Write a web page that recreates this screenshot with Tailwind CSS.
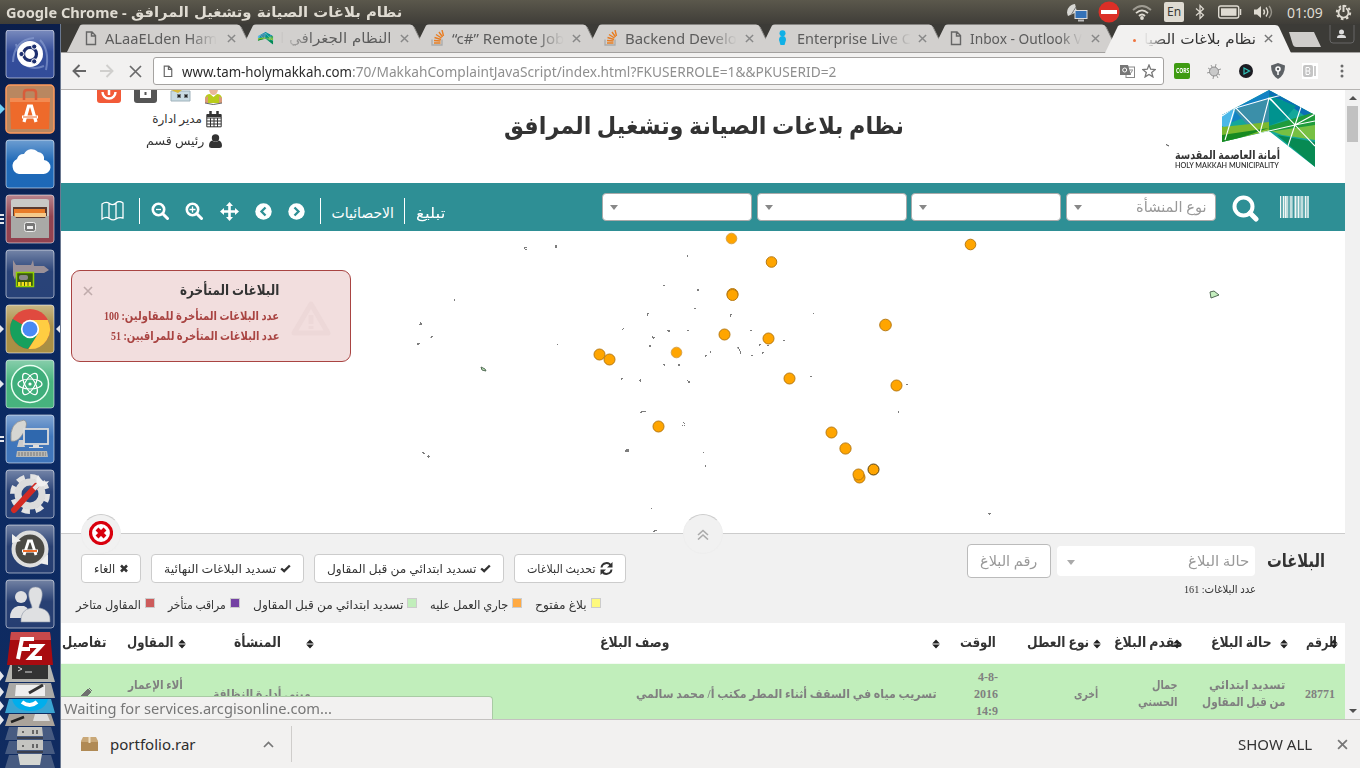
<!DOCTYPE html>
<html lang="ar">
<head>
<meta charset="utf-8">
<title>نظام بلاغات الصيانة وتشغيل المرافق</title>
<script src="https://cdn.jsdelivr.net/npm/@tailwindcss/browser@4"></script>
</head>
<body class="w-[1360px] h-[768px] overflow-hidden bg-[#f2f1f0] font-['Noto_Sans','DejaVu_Sans',sans-serif] text-[#333]">
<svg width="0" height="0" class="absolute">
  <defs>
    <linearGradient id="gloss" x1="0" y1="0" x2="0" y2="1"><stop offset="0" stop-color="#fff" stop-opacity=".38"/><stop offset=".45" stop-color="#fff" stop-opacity=".05"/><stop offset="1" stop-color="#fff" stop-opacity=".04"/></linearGradient>
    <symbol id="tab" viewBox="0 0 186 28"><path d="M0 28 L13 1.500 Q14 .5 16 .5 H170 Q173 .5 174 3 L186 28Z" fill="currentColor"/><path d="M174 3 L186 27.500" stroke="#8f8e8c" fill="none"/></symbol>
    <symbol id="page" viewBox="0 0 12 15"><path d="M1.500 1H7L10.500 4.500V13.500H1.500ZM6.500 1V5H10.500" fill="none" stroke="#666" stroke-width="1.400"/></symbol>
    <symbol id="x" viewBox="0 0 10 10"><path d="M1 1 9 9M9 1 1 9" stroke="currentColor" stroke-width="1.600"/></symbol>
    <symbol id="stack" viewBox="0 0 14 16"><path d="M1 9.500V15H11V9.500" fill="none" stroke="#aaa" stroke-width="1.300"/><path d="M3 13H9.500M3 10.500 9.500 11M3.500 7.500 10 9.500M5 4.500 10.500 8M8 2 11.500 7M11 0 12.500 6" stroke="#e87d22" stroke-width="1.400"/></symbol>
    <symbol id="sort" viewBox="0 0 8 10"><path d="M4 .5 7.800 4.500H.2ZM4 9.500 .2 5.500H7.800Z" fill="#222"/></symbol>
    <symbol id="check" viewBox="0 0 12 10"><path d="M1.200 5 4.500 8 10.800 1.700" fill="none" stroke="#333" stroke-width="2.600"/></symbol>
    <symbol id="zoomglass" viewBox="0 0 18 18"><circle cx="7.500" cy="7.500" r="5.700" fill="none" stroke="#fff" stroke-width="2.600"/><path d="M11.800 11.800 16.500 16.500" stroke="#fff" stroke-width="3" stroke-linecap="round"/></symbol>
    <symbol id="logo" viewBox="0 0 93 78">
      <clipPath id="lc"><path d="M0 25 47 0 93 25V77L47 41 0 52Z"/></clipPath>
      <g clip-path="url(#lc)"><rect width="93" height="78" fill="#14a79a"/><path d="M0 25 47 0V18L0 36Z" fill="#1283c4"/><path d="M0 36V24L14 18 7 40Z" fill="#4bb8e8"/><path d="M12 20 47 8V38L30 40Z" fill="#3b8fa9"/><path d="M47 0 93 25V33L60 10 47 8Z" fill="#0a6fb4"/><path d="M47 5 74 16 62 30 47 36Z" fill="#00938f"/><path d="M0 37 47 32V41L0 52Z" fill="#7bb92f"/><path d="M0 45 34 40 47 38 0 54Z" fill="#178a22"/><path d="M47 40 93 30V50L60 45Z" fill="#77c043"/><path d="M47 36 93 22V35L47 42Z" fill="#1f9b3c"/><path d="M55 45 93 52V77Z" fill="#078a53"/>
      <path d="M3 50 13 17 38 43 47 8 73 35 93 31M0 22 48 8 60 5M48 8 73 35 93 56M79 17 66 56M38 43 73 35 93 24M0 26 13 17" stroke="#fff" stroke-width="1.100" fill="none"/></g>
    </symbol>
  </defs>
</svg>
<div class="flex h-[768px] flex-col">

<!-- desktop panel -->
<header class="flex h-6 shrink-0 items-center bg-linear-to-b from-[#5b584c] to-[#3f3d38] pr-2 pl-[6px] text-[#dfdbd2]">
  <span data-fit class="w-[121px] text-[14px] font-bold">Google Chrome -</span>
  <span data-fit dir="rtl" class="ml-[4px] w-[271px] font-['DejaVu_Sans'] text-[14px] font-bold">نظام بلاغات الصيانة وتشغيل المرافق</span>
  <div class="ml-auto flex items-center">
    <svg width="23" height="20" viewBox="0 0 23 20"><path d="M2 14C-1 8 4 2 9 2L11 10Z" fill="#d8d8d4"/><path d="M5 13 10 5" stroke="#777"/><rect x="9" y="8.500" width="12" height="8" fill="#3472b8" stroke="#ddd"/><path d="M12 18.500H18" stroke="#bbb" stroke-width="2"/></svg>
    <svg class="ml-[9px]" width="22" height="22"><circle cx="11" cy="11" r="10.500" fill="#dc2f27"/><rect x="3" y="9" width="16" height="4" fill="#fff"/></svg>
    <svg class="ml-[12px]" width="20" height="16" viewBox="0 0 20 16" fill="none" stroke="#dfdbd2" stroke-width="1.800"><path d="M1 6Q10-2 19 6" opacity=".55"/><path d="M4 9.200Q10 3.500 16 9.200M7 12Q10 9 13 12"/><circle cx="10" cy="14" r="1" fill="#dfdbd2"/></svg>
    <span class="ml-[12px] flex h-5 w-5 items-center justify-center rounded-xs bg-[#dfdbd2] text-[12px] text-[#3c3b37]">En</span>
    <svg class="ml-[11px]" width="10" height="16" viewBox="0 0 10 16" fill="none" stroke="#dfdbd2" stroke-width="1.200"><path d="M1 4.500 8.500 11 5 14.500V1.500L8.500 5 1 11.500"/></svg>
    <svg class="ml-[13px]" width="24" height="14" fill="none" stroke="#dfdbd2"><rect x=".7" y="1" width="20" height="12" rx="2" stroke-width="1.400"/><rect x="3" y="3.300" width="15.500" height="7.500" fill="#dfdbd2" stroke="none"/><path d="M22.500 4V10" stroke-width="1.500"/></svg>
    <svg class="ml-[12px]" width="20" height="16" viewBox="0 0 20 16" fill="none" stroke="#dfdbd2" stroke-width="1.400"><path d="M0 5.500H3L7 2V14L3 10.500H0Z" fill="#dfdbd2" stroke="none"/><path d="M9.500 5.500Q11.500 8 9.500 10.500M12 3.500Q15.500 8 12 12.500"/><path d="M15 2Q20 8 15 14" opacity=".5"/></svg>
    <span data-fit class="ml-[13px] w-[36px] text-[14px]">01:09</span>
    <svg class="ml-[12px]" width="17" height="17" viewBox="0 0 17 17" fill="none" stroke="#dfdbd2"><circle cx="8.500" cy="8.500" r="6.700" stroke-width="2" stroke-dasharray="2.600 2.660"/><path d="M6 4.300A5 5 0 1 0 11 4.300" stroke-width="1.800"/><path d="M8.500 1V8" stroke-width="2"/></svg>
  </div>
</header>

<div class="flex min-h-0 flex-1">
<!-- launcher -->
<aside class="flex w-[61px] shrink-0 flex-col border-r border-[#6a7890] bg-linear-to-b from-[#0b1e4b] via-[#0b2a63] to-[#102b60] pt-[6px]">
  <svg width="60" height="738" viewBox="0 30 60 738">
    <g stroke="#fff" stroke-opacity=".3">
      <g transform="translate(6 30)"><rect width="48" height="48" rx="3" fill="#2a4596"/><rect width="48" height="48" rx="3" fill="url(#gloss)"/></g>
      <g transform="translate(6 85)"><rect width="48" height="48" rx="4" fill="#b98760" stroke="#ff9a5c" stroke-opacity="1" stroke-width="1.500"/></g>
      <g transform="translate(6 140)"><rect width="48" height="48" rx="3" fill="#1462b5"/><rect width="48" height="48" rx="3" fill="url(#gloss)"/></g>
      <g transform="translate(6 195)"><rect width="48" height="48" rx="3" fill="#8d3a48"/><rect width="48" height="48" rx="3" fill="url(#gloss)"/></g>
      <g transform="translate(6 250)"><rect width="48" height="48" rx="3" fill="#1f3a72"/><rect width="48" height="48" rx="3" fill="url(#gloss)"/></g>
      <g transform="translate(6 305)"><rect width="48" height="48" rx="3" fill="#a58a3c"/><rect width="48" height="48" rx="3" fill="url(#gloss)"/></g>
      <g transform="translate(6 360)"><rect width="48" height="48" rx="3" fill="#3fb078"/><rect width="48" height="48" rx="3" fill="url(#gloss)"/></g>
      <g transform="translate(6 415)"><rect width="48" height="48" rx="3" fill="#366fb8"/><rect width="48" height="48" rx="3" fill="url(#gloss)"/></g>
      <g transform="translate(6 470)"><rect width="48" height="48" rx="3" fill="#1f3a72"/><rect width="48" height="48" rx="3" fill="url(#gloss)"/></g>
      <g transform="translate(6 525)"><rect width="48" height="48" rx="3" fill="#1d366c"/><rect width="48" height="48" rx="3" fill="url(#gloss)"/></g>
      <g transform="translate(6 580)"><rect width="48" height="48" rx="3" fill="#1d366c"/><rect width="48" height="48" rx="3" fill="url(#gloss)"/></g>
    </g>
    <!-- dash -->
    <path d="M13 62Q14 40 34 38M46 70Q50 50 40 40M16 44Q22 75 44 66" fill="none" stroke="#8fa3d6" stroke-width="2" opacity=".6"/>
    <circle cx="30" cy="54" r="13" fill="#fff"/><circle cx="30" cy="54" r="6.500" fill="none" stroke="#1d2f6f" stroke-width="3.200"/><g fill="#1d2f6f" stroke="#fff"><circle cx="21.500" cy="54" r="2.600"/><circle cx="34.200" cy="46.600" r="2.600"/><circle cx="34.200" cy="61.400" r="2.600"/></g>
    <!-- software center -->
    <path d="M10 98H50L49 129H11Z" fill="#ee6a2b"/><path d="M10 98H50V102H10Z" fill="#f28a52"/><path d="M24 100V93Q24 90 27 90H33Q36 90 36 93V100" fill="none" stroke="#d85c3a" stroke-width="2.500"/><path d="M24 122 28.500 106H31.500L36 122M22 117H38" fill="none" stroke="#fff" stroke-width="3.200"/><path d="M23 117H37" stroke="#ee6a2b"/>
    <!-- cloud -->
    <path d="M19 174A8 8 0 0 1 17 159 7 7 0 0 1 24 154 8.500 8.500 0 0 1 38 152 6.500 6.500 0 0 1 44 160 7 7 0 0 1 43 174Z" fill="#fff"/>
    <!-- files -->
    <path d="M11 201Q11 199 14 199H46Q49 199 49 201V238H11Z" fill="#c9c9c7"/><path d="M13 207H47V218H13Z" fill="#5a3a30"/><path d="M14 209H45V217H14Z" fill="#e87b28"/><path d="M15 213H46V217H15Z" fill="#f6c98a"/><path d="M11 216H15L16 218H45L46 216H49V238H11Z" fill="#a9a9a7"/><rect x="24.500" y="222.500" width="11" height="9" rx="2" fill="#777" stroke="#eee"/><rect x="27" y="226" width="6" height="3" fill="#eee"/>
    <!-- caliper -->
    <path d="M13 260 16 265H31L33 260 34 266H44L49 270 44 273H34L32 280 30 273H17L15 280 13 275Z" fill="#9a9098"/><rect x="16.500" y="272.500" width="17" height="14" fill="#3a5a10" stroke="#8fd000" stroke-width="1.500"/><path d="M18 284H32" stroke="#f4e11c" stroke-width="4" stroke-dasharray="2.500 1"/><rect x="19" y="275" width="9" height="5" rx="2" fill="#888"/>
    <!-- chrome -->
    <circle cx="30" cy="329" r="20" fill="#e04a3f"/><path d="M30 329 12.700 319A20 20 0 0 0 28 348.900L38.500 334Z" fill="#16a05d"/><path d="M30 320H47.800A20 20 0 0 1 28.500 349L38.500 333Z" fill="#ffcd42"/><circle cx="30" cy="329" r="9.200" fill="#fff"/><circle cx="30" cy="329" r="7.500" fill="#4a8af4"/>
    <!-- atom -->
    <circle cx="30" cy="384" r="18.500" fill="#3fae7b" stroke="#e9fff2" stroke-width="1.500"/><g fill="none" stroke="#fff" stroke-width="1.200"><ellipse cx="30" cy="384" rx="12" ry="5"/><ellipse cx="30" cy="384" rx="12" ry="5" transform="rotate(60 30 384)"/><ellipse cx="30" cy="384" rx="12" ry="5" transform="rotate(120 30 384)"/></g><circle cx="30" cy="384" r="1.600" fill="#fff"/>
    <!-- remote desktop -->
    <path d="M11 441Q9 422 24 420 29 422 24 432 18 443 11 441Z" fill="#d6d6d2" stroke="#888" stroke-width=".7"/><path d="M19 440H23L25 447H17Z" fill="#ccc"/><rect x="24" y="429" width="24" height="15" fill="#2f68ae" stroke="#dcdcdc" stroke-width="1.800"/><path d="M33 445H39V447H43V448H29V447H33Z" fill="#ddd"/><path d="M17 451H47L48 457H16Z" fill="#b9b9b5"/><path d="M18 453H46M18 455H46" stroke="#777" stroke-dasharray="2 1"/>
    <!-- settings -->
    <circle cx="30" cy="494" r="17.500" fill="none" stroke="#e3e3e3" stroke-width="5" stroke-dasharray="8 5.700"/><circle cx="30" cy="494" r="12" fill="none" stroke="#dcdcdc" stroke-width="7"/><path d="M14 510 36 486" stroke="#d32a23" stroke-width="6" stroke-linecap="round"/><path d="M34 489 41 482" stroke="#e5e5e5" stroke-width="4"/><path d="M38 475Q34 482 39 486 45 488 49 481L44 482 41 479Z" fill="#f0f0f0"/>
    <!-- updater -->
    <circle cx="30" cy="549" r="16.500" fill="#4b4a45" stroke="#dedede" stroke-width="4"/><path d="M24 555 28.500 541H31.500L36 555M22 551H38" fill="none" stroke="#fff" stroke-width="2.800"/><path d="M23 551H37" stroke="#ef6b27" stroke-width="2"/><path d="M12 534 21 541 12 543ZM48 565V554L39 563Z" fill="#eee"/>
    <!-- users -->
    <g fill="#dfe0e2"><circle cx="21" cy="597" r="6"/><path d="M10 618Q10 608 18 606H24Q30 608 30 618Z"/><path d="M35.500 587C41 587 43 591 42 597 41 603 39 605 39 608H40Q51 610 50 622H21Q20 610 31 608H32C32 605 30 603 29 597 28 591 30 587 35.500 587Z" stroke="#8c93a5" stroke-width=".6"/></g>
    <!-- collapsed stack -->
    <path d="M11 632H50L53 665H7Z" fill="#a80b10"/><path d="M11 632H50L51 640H10Z" fill="#c8494b"/>
    <path d="M18 659 22 639H34M20 649H30M29 646H41L30 658H42" fill="none" stroke="#fff" stroke-width="4"/>
    <path d="M10 665H50L55 682H5Z" fill="#b5b5b0"/><path d="M12 665H48V679H12Z" fill="#333"/><path d="M18 667 22 669 18 671M25 672H32" stroke="#ddd" fill="none"/>
    <path d="M9 683H51L55 698H5Z" fill="#aaa9a6"/><path d="M16 685H45V696H15Z" fill="#eee"/><path d="M29 693 43 685" stroke="#333" stroke-width="3"/>
    <path d="M9 699H51L55 713H5Z" fill="#3aa4d2"/><path d="M12 699H48Q45 711 30 711 15 711 12 699Z" fill="#00aeec"/><path d="M22 702Q30 708 37 702" fill="none" stroke="#fff" stroke-width="4"/>
    <path d="M9 714H51L55 726H5Z" fill="#aaa39b"/><path d="M11 722 24 717" stroke="#222" stroke-width="2.500"/><path d="M35 714H47L50 721H33Z" fill="#ddd"/>
    <path d="M9 727H51L55 740H5ZM9 741H51L55 754H5ZM9 755H51L55 768H5Z" fill="#6d7b98" fill-opacity=".6"/><path d="M18 727H42L43 736H17ZM17 740H43V750H17Z" fill="#c4c4c1"/><path d="M23 731V733M33 730V734M23 745V747M33 744V748M37 730V734M37 744V748" stroke="#666" stroke-width="2"/><path d="M17 738H43M17 752H43" stroke="#3a3f4d" stroke-width="2"/><path d="M18 754H42L40 765H20Z" fill="#d4d6d2"/>
    <path d="M0 104 5 109 0 114Z" fill="#6fd0f5"/><g fill="#e4e6ec"><path d="M0 325 4 329 0 333ZM60 325 56 329 60 333ZM0 380 4 384 0 388ZM0 671 4 676 0 681ZM0 687 4 692 0 697ZM0 701 4 706 0 711ZM0 715 4 720 0 725ZM0 214H4V216H0ZM0 218H4V220H0ZM0 222H4V224H0ZM0 436H4V438H0ZM0 440H4V442H0Z"/></g>
  </svg>
</aside>

<main class="flex min-w-0 flex-1 flex-col">
  <!-- tab strip -->
  <div class="flex h-[29px] shrink-0 border-b border-[#a3a19f] bg-[#3c3b37] pl-[6px] text-[14px] text-[#5c5c5c]">
    <div class="relative mr-[-13px] flex h-7 w-[186px] shrink-0 items-center pl-[18px]"><svg class="absolute inset-0 text-[#d2d0ce]" width="186" height="28"><use href="#tab"/></svg>
      <svg class="relative" width="12" height="15"><use href="#page"/></svg><span class="relative ml-[8px] w-[112px] overflow-hidden whitespace-nowrap mask-r-from-75%"><span data-fit class="inline-block w-[112px]">ALaaELden Ham</span></span><svg class="relative ml-[10px] text-[#888]" width="9" height="9"><use href="#x"/></svg></div>
    <div class="relative mr-[-13px] flex h-7 w-[186px] shrink-0 items-center pl-[17px]"><svg class="absolute inset-0 text-[#d2d0ce]" width="186" height="28"><use href="#tab"/></svg>
      <svg class="relative" width="17" height="13"><use href="#logo"/></svg><span dir="rtl" class="relative ml-[6px] w-[112px] overflow-hidden whitespace-nowrap mask-l-from-70%"><span data-fit class="inline-block w-[112px] font-['DejaVu_Sans']">النظام الجغرافي ا</span></span><svg class="relative ml-[8px] text-[#888]" width="9" height="9"><use href="#x"/></svg></div>
    <div class="relative mr-[-13px] flex h-7 w-[186px] shrink-0 items-center pl-[18px]"><svg class="absolute inset-0 text-[#d2d0ce]" width="186" height="28"><use href="#tab"/></svg>
      <svg class="relative" width="14" height="16"><use href="#stack"/></svg><span class="relative ml-[7px] w-[112px] overflow-hidden whitespace-nowrap mask-r-from-75%"><span data-fit class="inline-block w-[112px]">“c#” Remote Job</span></span><svg class="relative ml-[8px] text-[#888]" width="9" height="9"><use href="#x"/></svg></div>
    <div class="relative mr-[-13px] flex h-7 w-[186px] shrink-0 items-center pl-[18px]"><svg class="absolute inset-0 text-[#d2d0ce]" width="186" height="28"><use href="#tab"/></svg>
      <svg class="relative" width="14" height="16"><use href="#stack"/></svg><span class="relative ml-[7px] w-[112px] overflow-hidden whitespace-nowrap mask-r-from-75%"><span data-fit class="inline-block w-[112px]">Backend Develo</span></span><svg class="relative ml-[8px] text-[#888]" width="9" height="9"><use href="#x"/></svg></div>
    <div class="relative mr-[-13px] flex h-7 w-[186px] shrink-0 items-center pl-[19px]"><svg class="absolute inset-0 text-[#d2d0ce]" width="186" height="28"><use href="#tab"/></svg>
      <svg class="relative" width="9" height="16"><circle cx="4.500" cy="3.300" r="3" fill="#10b0e6"/><path d="M1 10Q1 6 4.500 6T8 10L6.500 15H2.500Z" fill="#10b0e6"/></svg><span class="relative ml-[10px] w-[114px] overflow-hidden whitespace-nowrap mask-r-from-75%"><span data-fit class="inline-block w-[114px]">Enterprise Live C</span></span><svg class="relative ml-[7px] text-[#888]" width="9" height="9"><use href="#x"/></svg></div>
    <div class="relative mr-[-13px] flex h-7 w-[186px] shrink-0 items-center pl-[18px]"><svg class="absolute inset-0 text-[#d2d0ce]" width="186" height="28"><use href="#tab"/></svg>
      <svg class="relative" width="12" height="15"><use href="#page"/></svg><span class="relative ml-[8px] w-[112px] overflow-hidden whitespace-nowrap mask-r-from-80%"><span data-fit class="inline-block w-[112px]">Inbox - Outlook V</span></span><svg class="relative ml-[9px] text-[#888]" width="9" height="9"><use href="#x"/></svg></div>
    <div class="relative flex h-[29px] w-[186px] shrink-0 items-center pl-[28px] text-[#333]"><svg class="absolute inset-0 text-[#f2f1f0]" width="186" height="29" viewBox="0 0 186 29"><path d="M0 29 13 2Q14 1 16 1H170Q173 1 174 3L186 29Z" fill="currentColor"/></svg>
      <span class="relative mt-[3px] h-[3px] w-[3px] rounded-full bg-[#f0743e]"></span><span dir="rtl" class="relative ml-[8px] w-[112px] overflow-hidden whitespace-nowrap mask-l-from-80%"><span data-fit class="inline-block w-[112px] font-['DejaVu_Sans']">نظام بلاغات الصيا</span></span><svg class="relative ml-[8px] text-[#777]" width="9" height="9"><use href="#x"/></svg></div>
    <svg class="mt-[7px] ml-[-3px]" width="34" height="17"><path d="M1 1H26L33 16H8Q6 16 5 14Z" fill="#cfcdcb"/></svg>
    <svg class="mt-[1px] ml-[7px]" width="26" height="20"><path d="M1 0V15Q1 18 4 18H22Q25 18 25 15V0" fill="none" stroke="#666"/><circle cx="12.500" cy="7" r="2.500" fill="#ddd"/><path d="M8 13Q8 10 11 10H14Q17 10 17 13Z" fill="#ddd"/></svg>
  </div>
  <!-- toolbar -->
  <div class="flex h-[37px] shrink-0 items-center border-b border-[#b6b4b2] bg-[#f2f1f0] pl-[11px]">
    <svg width="14" height="14" fill="none" stroke="#666" stroke-width="1.900"><path d="M14 7H1.500M7.500 1 1.500 7 7.500 13"/></svg>
    <svg class="ml-[14px]" width="14" height="14" fill="none" stroke="#d0cfcd" stroke-width="1.900"><path d="M0 7H12.500M6.500 1 12.500 7 6.500 13"/></svg>
    <svg class="ml-[15px]" width="13" height="13" fill="none" stroke="#6a6a6a" stroke-width="1.700"><path d="M1 1 12 12M12 1 1 12"/></svg>
    <div class="ml-[11px] flex h-7 w-[1011px] items-center rounded-[3px] border border-[#a5a3a1] bg-white pl-[9px] text-[14px] text-[#8f8f8f]">
      <svg width="10" height="13"><use href="#page"/></svg>
      <span data-fit class="ml-[9px] w-[170px] text-[#2b2b2b]">www.tam-holymakkah.com</span><span data-fit class="w-[484px]">:70/MakkahComplaintJavaScript/index.html?FKUSERROLE=1&amp;&amp;PKUSERID=2</span>
      <svg class="ml-auto" width="15" height="14"><rect x="6" y="3" width="8.500" height="10.500" fill="#fff" stroke="#888"/><path d="M0 1H8L11 11H0Z" fill="#777"/><circle cx="4.700" cy="6" r="2" fill="none" stroke="#fff"/><path d="M9.500 6H13M10 10 12.500 6.500" stroke="#888"/></svg>
      <svg class="mr-[7px] ml-[7px]" width="14" height="14" viewBox="0 0 14 14"><path d="M7 1 8.700 5.200 13.200 5.500 9.700 8.400 10.900 12.900 7 10.400 3.100 12.900 4.300 8.400.8 5.500 5.300 5.200Z" fill="none" stroke="#777" stroke-width="1.300"/></svg>
    </div>
    <div class="ml-[10px] flex h-4 w-4 items-center justify-center rounded-[2px] bg-[#3f9b12] text-[7px] font-bold text-white"><span data-fit class="w-[13px]">CORS</span></div>
    <svg class="ml-[16px]" width="17" height="17"><g stroke="#999"><path d="M2 5 14 12M5 2 12 15M1 10 15 6M10 1 7 16"/></g><circle cx="8" cy="8.500" r="4.500" fill="#c9c9c9" stroke="#8c8c8c"/></svg>
    <svg class="ml-[16px]" width="14" height="14"><circle cx="7" cy="7" r="7" fill="#1c1c22"/><path d="M5 4 10.500 7 5 10Z" fill="none" stroke="#31c3ba" stroke-width="1.200"/></svg>
    <svg class="ml-[18px]" width="14" height="16"><path d="M7 0 14 2.500Q14 12 7 16 0 12 0 2.500Z" fill="#5d6165"/><circle cx="7" cy="6" r="2" fill="none" stroke="#fff" stroke-width="1.500"/><path d="M7 8V12" stroke="#fff" stroke-width="1.500"/></svg>
    <span class="ml-[17px] flex h-4 w-4 items-center justify-center bg-white"><svg width="14" height="12"><rect width="10" height="12" rx="2" fill="#c4c4c4"/><path d="M3 2.500H6L7 4 6 6 7 8 6 9.500H3ZM3 6H6" fill="none" stroke="#fff"/><path d="M12 1V11" stroke="#bbb" stroke-width="1.500"/></svg></span>
    <svg class="ml-[22px]" width="4" height="14" fill="#6a6a6a"><circle cx="2" cy="2" r="1.500"/><circle cx="2" cy="7" r="1.500"/><circle cx="2" cy="12" r="1.500"/></svg>
  </div>

  <!-- web page with scrollbar -->
  <div class="relative flex h-[629px] shrink-0">
    <div class="flex w-[1284px] flex-col overflow-hidden bg-white font-['Liberation_Serif','DejaVu_Sans',serif]">
      <div class="flex h-[93px] shrink-0 justify-between">
        <div class="flex w-[161px] flex-col items-end pl-[36px]">
          <div class="flex h-[14px] items-start gap-[13px]">
            <svg width="24" height="13"><path d="M0 0H24V10Q24 13 21 13H3Q0 13 0 10Z" fill="#f25a38"/><path d="M5.500 0A6.500 6.500 0 0 0 18.500 0" fill="none" stroke="#fff" stroke-width="2.400" transform="translate(0 2)"/><path d="M12 0V5" stroke="#fff" stroke-width="2.500"/></svg>
            <svg width="23" height="13"><path d="M0 0H23V10Q23 13 20 13H3Q0 13 0 10Z" fill="#555"/><path d="M6 0H17V8H6Z" fill="#fff"/><path d="M11.500 2V5" stroke="#555" stroke-width="2"/></svg>
            <svg width="22" height="13"><path d="M1 1H20V11H1Z" fill="#c9dbe3" stroke="#9fb2bb"/><path d="M1 0H12L8 3Z" fill="#d6b83a"/><path d="M7 6H11M9 4V8M14 6H18M16 4V8M7.500 4.500 10.500 7.500M10.500 4.500 7.500 7.500M14.500 4.500 17.500 7.500M17.500 4.500 14.500 7.500" stroke="#222"/></svg>
            <svg width="17" height="15"><path d="M4 0H13Q12 5 8.500 5T4 0Z" fill="#e9b799"/><path d="M0 13V8Q1 4 5 4L8.500 7 12 4Q16 4 17 8V13Z" fill="#b9cc1b"/><path d="M0 13V8L3 6V13ZM17 13V8L14 6V13Z" fill="#d99a7a"/><path d="M0 13Q8 16 17 13" stroke="#666" fill="none"/></svg>
          </div>
          <div class="mt-[7px] flex h-4 items-center gap-[4px]"><span data-fit dir="rtl" class="w-[50px] text-[12px]">مدير ادارة</span><svg width="16" height="17" fill="none" stroke="#333"><path d="M.8 3.500H15.200V15.800H.8ZM.8 7H15.200M.8 10H15.200M.8 13H15.200M4.500 7V16M8 7V16M11.500 7V16"/><path d="M1 4.500H15" stroke-width="3"/><path d="M4.500 0V4M11.500 0V4" stroke-width="2.500"/></svg></div>
          <div class="mt-[6px] flex h-4 items-center gap-[5px]"><span data-fit dir="rtl" class="w-[58px] text-[12px]">رئيس قسم</span><svg width="13" height="14" fill="#333"><circle cx="6.500" cy="4" r="3.700"/><path d="M0 12Q0 7 3.500 6.500 6.500 9.500 9.500 6.500 13 7 13 12 13 14 10.500 14H2.500Q0 14 0 12Z"/></svg></div>
        </div>
        <h1 class="mt-[18px] ml-[20px]" dir="rtl"><span data-fit class="inline-block w-[400px] text-[24px] leading-9 font-bold">نظام بلاغات الصيانة وتشغيل المرافق</span></h1>
        <div class="relative mr-[30px] flex w-[149px] flex-col items-end">
          <svg width="93" height="78"><use href="#logo"/></svg>
          <svg class="absolute top-[54px] left-0" width="4" height="3"><path d="M0 .5 3 2" stroke="#444"/></svg>
          <div class="absolute top-[57px] left-[9px] leading-none"><span data-fit dir="rtl" class="block h-[13px] w-[105px] text-[12px] leading-[16px] font-bold">أمانة العاصمة المقدسة</span><span data-fit class="mt-px block h-2 w-[104px] font-['Lato'] text-[8px] leading-2 font-semibold">HOLY MAKKAH MUNICIPALITY</span></div>
        </div>
      </div>

      <nav class="flex h-12 shrink-0 items-center bg-[#2e8f95] pt-[8px] text-white">
        <svg class="ml-[40px]" width="23" height="20" fill="none" stroke="#fff" stroke-width="1.300"><path d="M1 3Q5 0 8.500 2.500T15 2 22 2V17Q18 16 15 18T8.500 17.500 1 18ZM8 2.500V17.500M15 2.500V17.500"/></svg>
        <span class="ml-[15px] h-[26px] w-px bg-white"></span>
        <svg class="ml-[11px]" width="18" height="18"><use href="#zoomglass"/><path d="M5 7.500H10" stroke="#fff" stroke-width="1.300"/></svg>
        <svg class="ml-[16px]" width="18" height="18"><use href="#zoomglass"/><path d="M4.500 7.500H10.500M7.500 4.500V10.500" stroke="#fff" stroke-width="1.300"/></svg>
        <svg class="ml-[17px]" width="19" height="19" fill="#fff"><path d="M9.500 0 13 4H10.800V8.200H15V6L19 9.500 15 13V10.800H10.800V15H13L9.500 19 6 15H8.200V10.800H4V13L0 9.500 4 6V8.200H8.200V4H6Z"/></svg>
        <svg class="ml-[16px]" width="17" height="17"><circle cx="8.500" cy="8.500" r="8.200" fill="#fff"/><path d="M10.500 4.500 6.500 8.500 10.500 12.500" fill="none" stroke="#2e8f95" stroke-width="2.300"/></svg>
        <svg class="ml-[16px]" width="17" height="17"><circle cx="8.500" cy="8.500" r="8.200" fill="#fff"/><path d="M6.500 4.500 10.500 8.500 6.500 12.500" fill="none" stroke="#2e8f95" stroke-width="2.300"/></svg>
        <span class="ml-[15px] h-[26px] w-px bg-white"></span>
        <span data-fit dir="rtl" class="mt-[4px] ml-[10px] w-[63px] text-[14px]">الاحصائيات</span>
        <span class="ml-[10px] h-[26px] w-px bg-white"></span>
        <span data-fit dir="rtl" class="mt-[4px] ml-[11px] w-[29px] text-[14px]">تبليغ</span>
        <div class="mt-[-8px] ml-[157px] flex gap-[4.600px]">
          <span class="flex h-7 w-[150px] items-center rounded border border-[#aaa] bg-white pl-[7px]"><i class="border-x-4 border-t-[5px] border-x-transparent border-t-[#888]"></i></span>
          <span class="flex h-7 w-[150px] items-center rounded border border-[#aaa] bg-white pl-[7px]"><i class="border-x-4 border-t-[5px] border-x-transparent border-t-[#888]"></i></span>
          <span class="flex h-7 w-[150px] items-center rounded border border-[#aaa] bg-white pl-[7px]"><i class="border-x-4 border-t-[5px] border-x-transparent border-t-[#888]"></i></span>
          <span class="flex h-7 w-[150px] items-center justify-between rounded border border-[#aaa] bg-white pr-[8px] pl-[7px] text-[#999]"><i class="border-x-4 border-t-[5px] border-x-transparent border-t-[#888]"></i><span data-fit dir="rtl" class="w-[71px] text-[14px]">نوع المنشأة</span></span>
        </div>
        <svg class="mt-[-5px] ml-[16px]" width="27" height="27"><circle cx="11.500" cy="11.500" r="9" fill="none" stroke="#fff" stroke-width="4"/><path d="M18 18 24 24" stroke="#fff" stroke-width="5" stroke-linecap="round"/></svg>
        <svg class="mt-[-8px] ml-[21px]" width="29" height="22"><rect width="29" height="22" fill="#8fc3c6"/><path d="M.5 0V22M3.500 0V22M7 0V22M11 0V22M15.500 0V22M18.500 0V22M22 0V22M28 0V22M5.500 0V22M25.500 0V22" stroke="#f2f7f5"/><path d="M2 0V22M9 0V22M13.500 0V22M24 0V22" stroke="#3e979d"/></svg>
      </nav>

      <!-- map -->
      <div class="relative h-[302px] shrink-0">
        <svg width="1284" height="302" viewBox="61 231 1284 302">
          <g fill="#666" fill-opacity=".85"><path d="M524 247h3v1h-3zM524 248h1v1h2v1h-2v-1h-1zM555 245h2v3h-2zM687 255h1v2h-1zM663 285h2v1h-2zM697 289h2v2h-2zM454 299h1v2h-1zM647 313h2v1h-1v2h-1zM694 308h2v1h-2zM420 322h1v1h1v2h-3v-1h1zM430 337h1v-1h2v1h-1v1h-1zM417 343h3v1h-1v1h-2zM557 344h1v1h-1zM622 329h1v-1h1v1h-1v1h-1zM652 336h1v1h2v1h-1v1h-1v-1h-1zM666 331h1v-1h3v2h-2v-1h-2zM687 330h2v1h-2zM649 345h2v2h-2zM730 314h2v1h-1v2h-1zM750 330h2v1h-2zM783 340h2v1h-2zM759 344h2v1h-1v1h-1zM767 345h2v1h-2zM762 352h2v1h-1v1h-1zM737 347h2v2h1v2h1v3h-1v-3h-1v-2h-1zM751 355h2v1h-2zM705 355h2v1h-1v1h-1zM710 351h1v2h-1zM662 365h1v-1h2v2h-1v-1h-2zM678 364h2v2h-2zM621 378h2v1h-1v1h-1zM639 380h1v-1h1v3h-1v-1h-1zM687 380h1v1h2v2h-2v-2h-1zM810 376h2v1h-2zM640 412h1v-1h5v1h-4v1h-2zM683 422h1v1h-1zM684 423h1v1h-1zM682 425h1v1h-1zM684 425h1v1h-1zM625 450h1v-1h3v3h-4zM422 452h2v1h1v1h-2v-1h-1zM427 456h1v-1h1v1h1v1h-1v1h-1v-1h-1zM703 452h1v1h-1zM705 465h1v2h-1zM651 508h1v1h-1zM653 531h1v-1h3v1h-2v1h-2zM813 313h1v1h-1zM906 384h2v1h-2zM898 411h1v2h-1zM988 513h3v1h-1v1h-1v-1h-1z"/></g>
          <path d="M481 367 485 369 486 371 482 370ZM1210 292 1214 291 1219 295 1211 298Z" fill="#c5efbf" stroke="#526b55"/>
          <g fill="#ffa500" stroke="#b77a14"><circle cx="731.500" cy="238.500" r="5.300" stroke="#d7a24a"/><circle cx="771.500" cy="262" r="5.300"/><circle cx="732.500" cy="294" r="5.500"/><circle cx="732.500" cy="295" r="5.500"/><circle cx="724.500" cy="334.500" r="5.500"/><circle cx="768.500" cy="338.500" r="5.500"/><circle cx="676.500" cy="352.500" r="5.300" stroke="#d7a24a"/><circle cx="599.500" cy="354.500" r="5.500"/><circle cx="609.500" cy="359.500" r="5.500"/><circle cx="789.500" cy="378.500" r="5.500"/><circle cx="658.500" cy="426.500" r="5.500"/><circle cx="970.500" cy="244.500" r="5.300"/><circle cx="885.500" cy="325" r="5.800"/><circle cx="896.500" cy="385.500" r="5.500"/><circle cx="831.500" cy="432.500" r="5.500"/><circle cx="845.500" cy="448.500" r="5.600"/><circle cx="859.500" cy="477.500" r="5.500"/><circle cx="858.500" cy="474.500" r="5.500"/><circle cx="873.500" cy="469.500" r="5.500" stroke="#5a4210"/></g>
        </svg>
        <div class="absolute top-[39px] left-[10px] flex h-[92px] w-[280px] rounded-[9px] border border-[#a94442] bg-[#f2dede] pl-[11px]">
          <svg class="mt-[15px] text-[#c0acac]" width="10" height="10"><use href="#x"/></svg>
          <div dir="rtl" class="mt-[10px] w-[186px] font-bold text-[#a94442]">
            <div class="h-[26px]"><span data-fit class="block w-[99px] text-[14px] leading-5 text-[#333]">البلاغات المتأخرة</span></div>
            <div class="h-5"><span data-fit class="block w-[175px] text-[12px] leading-[18px]">عدد البلاغات المتأخرة للمقاولين: 100</span></div>
            <div class="h-5"><span data-fit class="block w-[168px] text-[12px] leading-[18px]">عدد البلاغات المتأخرة للمراقبين: 51</span></div>
          </div>
          <svg class="mt-[28px] ml-[11px]" width="42" height="38"><path d="M21 5 38 34H4Z" fill="none" stroke="#edd8d8" stroke-width="5" stroke-linejoin="round"/><path d="M21 16V25M21 27V30" stroke="#edd8d8" stroke-width="5"/></svg>
        </div>
      </div>

      <!-- reports panel -->
      <section class="relative flex h-[90px] shrink-0 justify-between border-t border-[#ccc] bg-[#f1f1f1]">
        <span class="absolute top-[-20px] left-[20px] flex h-10 w-10 items-center justify-center rounded-full border border-[#eee] border-t-[#ccc] bg-[#f1f1f1]"><svg class="mt-[-3px]" width="24" height="24"><circle cx="12" cy="12" r="10.500" fill="#fff" stroke="#d9000d" stroke-width="3.200"/><path d="M8 8 16 16M16 8 8 16" stroke="#d9000d" stroke-width="4"/></svg></span>
        <span class="absolute top-[-20px] left-[622px] flex h-10 w-10 items-center justify-center rounded-full border border-[#eee] border-t-[#ccc] bg-[#f1f1f1]"><svg width="12" height="11" fill="none" stroke="#aaa" stroke-width="1.600"><path d="M1 6 6 1.500 11 6M1 10.500 6 6 11 10.500"/></svg></span>
        <div class="flex flex-col pt-[20px]">
          <div class="ml-[20px] flex gap-[10px] text-[12px]">
            <button class="flex h-[29px] w-[60px] items-center justify-center gap-[5px] rounded border border-[#ccc] bg-white"><span data-fit dir="rtl" class="w-[21px]">الغاء</span><svg width="8" height="9"><path d="M1 1.500 7 7.500M7 1.500 1 7.500" stroke="#333" stroke-width="2.500"/></svg></button>
            <button class="flex h-[29px] w-[153px] items-center justify-center gap-[4px] rounded border border-[#ccc] bg-white"><span data-fit dir="rtl" class="w-[112px]">تسديد البلاغات النهائية</span><svg width="11" height="9"><use href="#check"/></svg></button>
            <button class="flex h-[29px] w-[190px] items-center justify-center gap-[4px] rounded border border-[#ccc] bg-white"><span data-fit dir="rtl" class="w-[149px]">تسديد ابتدائي من قبل المقاول</span><svg width="11" height="9"><use href="#check"/></svg></button>
            <button class="flex h-[29px] w-[112px] items-center justify-center gap-[4px] rounded border border-[#ccc] bg-white"><span data-fit dir="rtl" class="w-[69px]">تحديث البلاغات</span><svg width="13" height="13" fill="none" stroke="#333" stroke-width="2"><path d="M1.500 5.500A5 5 0 0 1 11 4M11.500 7.500A5 5 0 0 1 2 9"/><path d="M12.500 0V5.500H7ZM.5 13V7.500H6Z" fill="#333" stroke="none"/></svg></button>
          </div>
          <div class="mt-[13px] ml-[15px] flex h-[18px] items-center text-[12px]">
            <span data-fit dir="rtl" class="w-[65px]">المقاول متاخر</span><i class="mt-[-4px] mr-[13px] ml-[4px] h-[10px] w-[10px] border border-[#ccc] bg-[#cd5c5c]"></i>
            <span data-fit dir="rtl" class="w-[58px]">مراقب متأخر</span><i class="mt-[-4px] mr-[13px] ml-[4px] h-[10px] w-[10px] border border-[#ccc] bg-[#7442a4]"></i>
            <span data-fit dir="rtl" class="w-[150px]">تسديد ابتدائي من قبل المقاول</span><i class="mt-[-4px] mr-[13px] ml-[4px] h-[10px] w-[10px] border border-[#ccc] bg-[#c1eebb]"></i>
            <span data-fit dir="rtl" class="w-[78px]">جاري العمل عليه</span><i class="mt-[-4px] mr-[13px] ml-[4px] h-[10px] w-[10px] border border-[#ccc] bg-[#ffaa43]"></i>
            <span data-fit dir="rtl" class="w-[52px]">بلاغ مفتوح</span><i class="mt-[-4px] ml-[4px] h-[10px] w-[10px] border border-[#ccc] bg-[#fdf97e]"></i>
          </div>
        </div>
        <div class="mr-5 flex w-[358px] flex-col pt-[10px]">
          <div class="flex h-[34px] items-center text-[14px] text-[#999]">
            <span class="flex h-[34px] w-[84px] items-center justify-center rounded border border-[#bbb] bg-white"><span data-fit dir="rtl" class="w-[57px]">رقم البلاغ</span></span>
            <span class="ml-[6px] flex h-[30px] w-[198px] items-center justify-between rounded bg-white pr-[6px] pl-[10px]"><i class="mt-[3px] border-x-4 border-t-[5px] border-x-transparent border-t-[#aaa]"></i><span data-fit dir="rtl" class="w-[61px]">حالة البلاغ</span></span>
            <span data-fit dir="rtl" class="ml-[12px] w-[58px] text-[18px] font-bold text-[#333]">البلاغات</span>
          </div>
          <span data-fit dir="rtl" class="mt-[3px] ml-[217px] block w-[72px] text-[11px] leading-4">عدد البلاغات: 161</span>
        </div>
      </section>

      <!-- reports table -->
      <div dir="rtl" class="flex h-[40px] shrink-0 items-center text-[14px] leading-5 font-bold [&>div]:relative [&>div]:shrink-0 [&_svg]:absolute [&_svg]:top-[6px] [&_svg]:right-[7px]">
        <div class="w-[50px] pr-[8px]"><span data-fit class="block w-[31px]">الرقم</span><svg width="8" height="10"><use href="#sort"/></svg></div>
        <div class="w-[107px] pr-[23px]"><span data-fit class="block w-[61px]">حالة البلاغ</span><svg width="8" height="10"><use href="#sort"/></svg></div>
        <div class="w-[80px] pr-[5px]"><span data-fit class="block w-[69px]">مقدم البلاغ</span><svg width="8" height="10"><use href="#sort"/></svg></div>
        <div class="w-[100px] pr-[19px]"><span data-fit class="block w-[62px]">نوع العطل</span><svg width="8" height="10"><use href="#sort"/></svg></div>
        <div class="w-[61px] pr-[12px]"><span data-fit class="block w-[36px]">الوقت</span></div>
        <div class="w-[626px] pr-[278px]"><span data-fit class="block w-[69px]">وصف البلاغ</span><svg width="8" height="10"><use href="#sort"/></svg></div>
        <div class="w-[128px] pr-[40px]"><span data-fit class="block w-[47px]">المنشأة</span><svg width="8" height="10"><use href="#sort"/></svg></div>
        <div class="w-[78px] pr-[19px]"><span data-fit class="block w-[47px]">المقاول</span><svg width="8" height="10"><use href="#sort"/></svg></div>
        <div class="w-[54px] pr-[9px]"><span data-fit class="block w-[44px]">تفاصيل</span></div>
      </div>
      <div class="flex h-px shrink-0 bg-[#f4fbf3]"></div>
      <div dir="rtl" class="flex h-[60px] shrink-0 items-center bg-[#c1eebb] text-[12px] leading-[17px] font-bold text-[#808080] [&>div]:shrink-0 [&>div]:pr-[10px]">
        <div class="w-[50px]"><span data-fit class="block w-[30px]">28771</span></div>
        <div class="w-[107px]"><span data-fit class="block w-[76px]">تسديد ابتدائي</span><span data-fit class="block w-[83px]">من قبل المقاول</span></div>
        <div class="w-[80px]"><span data-fit class="block w-[26px]">جمال</span><span data-fit class="block w-[40px]">الحسني</span></div>
        <div class="w-[100px]"><span data-fit class="block w-[24px]">أخرى</span></div>
        <div class="w-[61px]" dir="ltr"><div class="w-[51px] text-right">4-8-<br>2016<br>14:9</div></div>
        <div class="w-[626px]"><span data-fit class="block w-[301px]">تسريب مياه في السقف أثناء المطر مكتب أ/ محمد سالمي</span></div>
        <div class="w-[128px]"><span data-fit class="block w-[98px]">مبنى أدارة النظافة</span></div>
        <div class="w-[78px]"><span data-fit class="block w-[55px]">ألاء الإعمار</span><span data-fit class="block w-[55px]">المقاولات</span></div>
        <div class="w-[54px]"><svg class="mr-[13px]" width="13" height="13"><path d="M0 13 1 9 9 1 12 4 4 12ZM10 0 13 3" fill="#707070" stroke="#707070"/></svg></div>
      </div>
    </div>
    <div class="flex w-[15px] flex-col items-center bg-[#f1f1f1] pt-[6px] pb-[6px]"><i class="border-x-4 border-b-4 border-x-transparent border-b-[#505050]"></i><span class="mt-[6px] h-9 w-[11px] bg-[#c1c1c1]"></span><i class="mt-auto border-x-4 border-t-4 border-x-transparent border-t-[#505050]"></i></div>
    <div class="absolute bottom-0 left-0 flex h-[23px] w-[432px] items-center rounded-tr-[4px] border-t border-r border-[#a9cba4] bg-[#f2f1f0] pl-[3px] text-[14px] text-[#777]"><span data-fit class="w-[268px]">Waiting for services.arcgisonline.com...</span></div>
  </div>

  <!-- downloads -->
  <footer class="flex h-[49px] items-center border-t border-[#c4c2c0] bg-[#f2f1f0] pl-[20px]">
    <svg width="17" height="15"><path d="M2 0H15L17 4V14H0V4Z" fill="#c9a878"/><path d="M0 5H17V14H0Z" fill="#b08a55"/><path d="M8.500 0V6" stroke="#efe0c4" stroke-width="2"/></svg>
    <span data-fit class="ml-[12px] w-[86px] text-[15px] text-[#2d2d2d]">portfolio.rar</span>
    <svg class="ml-[67px]" width="11" height="7" fill="none" stroke="#777" stroke-width="1.700"><path d="M1 6 5.500 1.500 10 6"/></svg>
    <span class="ml-[17px] h-9 w-px bg-[#cfcdcb]"></span>
    <span data-fit class="mr-[25px] ml-auto w-[74px] text-[14px] text-[#333]">SHOW ALL</span>
    <svg class="mr-[12px] text-[#777]" width="11" height="11"><use href="#x"/></svg>
  </footer>
</main>
</div>
</div>
<script>
// Condense or widen each label so that it fills its box, again whenever the box or the label changes size.
function fit(el) {
  var inner = el.firstElementChild;
  var rtl = getComputedStyle(el).direction === 'rtl';
  if (!el.clientWidth || !inner.offsetWidth) return;
  el.style.flexShrink = '0';
  el.style.textAlign = rtl ? 'right' : 'left';
  inner.style.transformOrigin = rtl ? 'right center' : 'left center';
  inner.style.transform = 'scaleX(' + el.clientWidth / inner.offsetWidth + ')';
}
var observer = new ResizeObserver(function (entries) {
  entries.forEach(function (entry) {
    var t = entry.target;
    fit(t.hasAttribute('data-fit') ? t : t.parentElement);
  });
});
document.querySelectorAll('[data-fit]').forEach(function (el) {
  var inner = document.createElement('span');
  inner.className = 'inline-block whitespace-nowrap';
  while (el.firstChild) inner.appendChild(el.firstChild);
  el.appendChild(inner);
  observer.observe(el);
  observer.observe(inner);
});
addEventListener('load', function () { document.querySelectorAll('[data-fit]').forEach(fit); });
</script>
</body>
</html>
